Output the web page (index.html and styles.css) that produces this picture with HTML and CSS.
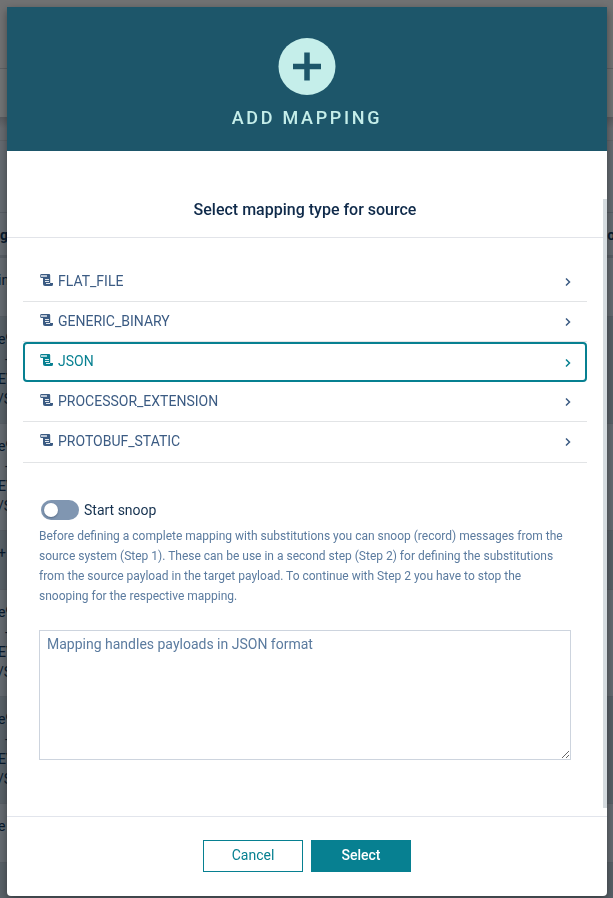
FILE: index.html
```html
<!DOCTYPE html>
<html lang="en">
<head>
<meta charset="utf-8">
<meta name="viewport" content="width=device-width, initial-scale=1">
<title>Add mapping</title>
<link rel="stylesheet" href="styles.css">
</head>
<body>
<svg class="defs" aria-hidden="true">
  <symbol id="scroll" viewBox="0 0 14 14">
    <path fill="currentColor" d="M1.500 1H9a1.200 1.200 0 0 1 1.200 1.200V10H13v1.500a1.500 1.500 0 0 1-1.500 1.500H5a2 2 0 0 1-2-2V5H1.500A1.300 1.300 0 0 1 .2 3.700V2.300A1.300 1.300 0 0 1 1.500 1z"/>
    <path fill="#fff" fill-opacity=".65" d="M1 2h6v2H1z"/>
    <path fill="#fff" fill-opacity=".85" d="M5 6h4v1H5zM5 8h4v1H5zM6 10h4v1H6z"/>
  </symbol>
  <symbol id="chevron" viewBox="0 0 8 10">
    <path fill="none" stroke="currentColor" stroke-width="1.500" d="M2 1.500l3.500 3.500L2 8.500"/>
  </symbol>
</svg>
<div class="page" aria-hidden="true">
  <div class="bar"></div>
  <div class="tabs"></div>
  <div class="strip"></div>
  <div class="space"></div>
  <div class="row head"><span>g</span><span>on</span></div>
  <div class="row small"><span>in</span></div>
  <div class="row big alt"><span>e9<br>&nbsp;&nbsp;-<br>EV<br>/S</span></div>
  <div class="row big"><span>e9<br>&nbsp;&nbsp;-<br>EV<br>/S</span></div>
  <div class="row small alt"><span>+</span></div>
  <div class="row big"><span>e9<br>&nbsp;&nbsp;-<br>EV<br>/S</span></div>
  <div class="row big alt"><span>e9<br>&nbsp;&nbsp;-<br>EV<br>/S</span></div>
  <div class="row small"><span>e</span></div>
  <div class="row small alt"></div>
</div>
<div class="overlay">
  <form class="dialog" role="dialog" aria-labelledby="title">
    <header class="header">
      <svg class="plus" viewBox="0 0 58 58" aria-hidden="true"><circle cx="29" cy="28.500" r="28.500" fill="#c5eeea"/><path d="M15 28.500h28M29 14.500v28" stroke="#1d566a" stroke-width="5.500"/></svg>
      <h1 id="title">ADD MAPPING</h1>
    </header>
    <main class="body">
      <h2>Select mapping type for source</h2>
      <ul class="types">
        <li><button type="button"><svg class="scroll"><use href="#scroll"/></svg><span>FLAT_FILE</span><svg class="chevron"><use href="#chevron"/></svg></button></li>
        <li><button type="button"><svg class="scroll"><use href="#scroll"/></svg><span>GENERIC_BINARY</span><svg class="chevron"><use href="#chevron"/></svg></button></li>
        <li class="selected"><button type="button"><svg class="scroll"><use href="#scroll"/></svg><span>JSON</span><svg class="chevron"><use href="#chevron"/></svg></button></li>
        <li><button type="button"><svg class="scroll"><use href="#scroll"/></svg><span>PROCESSOR_EXTENSION</span><svg class="chevron"><use href="#chevron"/></svg></button></li>
        <li><button type="button"><svg class="scroll"><use href="#scroll"/></svg><span>PROTOBUF_STATIC</span><svg class="chevron"><use href="#chevron"/></svg></button></li>
      </ul>
      <div class="details">
        <label class="switch"><input type="checkbox"><span>Start snoop</span></label>
        <p>Before defining a complete mapping with substitutions you can snoop (record) messages from the source system (Step 1). These can be use in a second step (Step 2) for defining the substitutions from the source payload in the target payload. To continue with Step 2 you have to stop the snooping for the respective mapping.</p>
        <textarea aria-label="Description">Mapping handles payloads in JSON format</textarea>
      </div>
      <div class="thumb"></div>
    </main>
    <footer class="footer">
      <button type="button" class="btn">Cancel</button>
      <button type="submit" class="btn primary">Select</button>
    </footer>
  </form>
</div>
</body>
</html>
```
FILE: styles.css
```css
* { box-sizing: border-box; }
body {
  margin: 0;
  height: 100vh;
  overflow: hidden;
  font: 14px/20px Roboto, sans-serif;
  color: #15314f;
  background: #656b71;
}
button, textarea { font: inherit; }
.defs { position: absolute; width: 0; height: 0; }

.bar { height: 69px; background: #717273; border-bottom: 1px solid #5f6265; }
.tabs { height: 48px; background: #717475; }
.strip { height: 24px; background: linear-gradient(#595c60, #686c71 50%); border-bottom: 1px solid #5f6469; }
.space { height: 71px; }
.row {
  display: flex;
  justify-content: space-between;
  overflow: hidden;
  white-space: nowrap;
  border-top: 1px solid #585e65;
  padding-top: 12px;
  color: #081a2e;
  background: #656b71;
}
.row span { margin-left: -2px; }
.alt { background: #596168; }
.head { height: 45px; font-weight: 700; border-bottom: 2px solid #585e65; }
.head span:first-child { margin-left: 0; }
.head span:last-child { margin-right: -10px; }
.small { height: 59px; }
.big { height: 107px; }

.overlay {
  position: fixed;
  inset: 0;
  padding: 7px 6px 2px 7px;
}
.dialog {
  display: flex;
  flex-direction: column;
  height: 100%;
  background: #fff;
  border-radius: 0 0 4px 4px;
  box-shadow: 0 3px 9px rgba(0, 0, 0, .4);
}
.header {
  display: flex;
  flex-direction: column;
  align-items: center;
  gap: 12px;
  height: 144px;
  padding-top: 31px;
  background: #1d566a;
}
.plus { width: 58px; height: 58px; }
h1 {
  margin: 0;
  color: #c5eeea;
  font-size: 18px;
  line-height: 20px;
  font-weight: 500;
  letter-spacing: .15em;
}
.body {
  position: relative;
  flex: 1;
  padding-right: 4px;
}
.thumb {
  position: absolute;
  top: 48px;
  right: 0;
  bottom: 8px;
  width: 4px;
  background: #d5dbdf;
}
h2 {
  margin: 0;
  padding: 48px 16px 17px;
  border-bottom: 1px solid #e2e4e9;
  color: #0f2a4a;
  font-size: 16px;
  line-height: 21px;
  font-weight: 500;
  text-align: center;
}
.types {
  margin: 24px 16px 0;
  padding: 0;
  list-style: none;
}
.types li { border-bottom: 1px solid #e2e4e6; }
.types button {
  display: flex;
  align-items: center;
  gap: 4px;
  width: 100%;
  height: 39px;
  padding: 0 15px 2px 17px;
  border: 0;
  background: none;
  color: #3b5b83;
  text-align: left;
}
.types span { flex: 1; }
.scroll { width: 14px; height: 14px; margin-bottom: 2px; }
.chevron { width: 8px; height: 10px; margin-top: 3px; }
.types .selected button {
  color: #078091;
  outline: 2px solid #078091;
  outline-offset: -2px;
  border-radius: 4px;
  height: 40px;
}
.types .selected { border: 0; }
.types li:last-child { padding-bottom: 1px; }
.details { padding: 37px 32px 0; }
.switch { display: flex; align-items: center; gap: 5px; padding-left: 2px; }
.switch input {
  appearance: none;
  display: flex;
  align-items: center;
  width: 38px;
  height: 20px;
  margin: 0;
  padding: 0 3px;
  border-radius: 10px;
  background: #8096b1;
}
.switch input::before {
  content: "";
  width: 14px;
  height: 14px;
  border-radius: 50%;
  background: #fff;
  box-shadow: 0 1px 2px rgba(20, 40, 70, .4);
}
p {
  margin: 6px 0 24px;
  font-size: 12px;
  line-height: 20px;
  color: #5b7b9f;
}
textarea {
  display: block;
  width: 100%;
  height: 130px;
  padding: 3px 7px;
  border: 1px solid #cdd4de;
  border-radius: 0;
  color: #5b7b9f;
  background: #fff;
  resize: vertical;
}
.footer {
  display: flex;
  justify-content: center;
  gap: 8px;
  height: 80px;
  padding-top: 23px;
  border-top: 1px solid #e2e5ec;
}
.btn {
  width: 100px;
  height: 32px;
  padding: 0 0 2px;
  border: 1px solid #078091;
  background: #fff;
  color: #078091;
}
.btn.primary { background: #078091; color: #fff; font-weight: 500; }
```
